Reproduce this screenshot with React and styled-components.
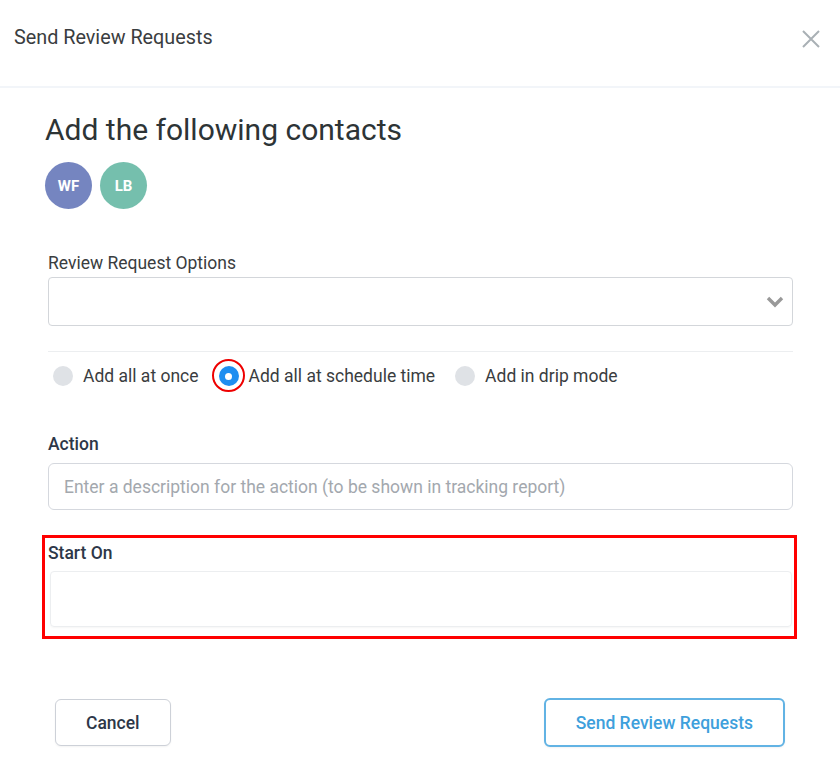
import React from "react";
import styled, { createGlobalStyle } from "styled-components";

const GlobalStyle = createGlobalStyle`
  * { box-sizing: border-box; }
  body {
    margin: 0;
    background: #fff;
    font-family: Roboto, "Liberation Sans", sans-serif;
  }
`;

function App() {
  const contacts = [
    { initials: "WF", color: "#7585c0" },
    { initials: "LB", color: "#75bfad" },
  ];
  const modes = [
    { label: "Add all at once", checked: false },
    { label: "Add all at schedule time", checked: true, marked: true },
    { label: "Add in drip mode", checked: false },
  ];

  return (
    <Modal>
      <GlobalStyle />
      <Header>
        <Title>Send Review Requests</Title>
        <CloseButton aria-label="close">
          <svg width="18" height="18" viewBox="0 0 18 18">
            <path d="M1 1L17 17M17 1L1 17" stroke="#a9b0b5" strokeWidth="2" fill="none" />
          </svg>
        </CloseButton>
      </Header>

      <Body>
        <Heading>Add the following contacts</Heading>
        <Avatars>
          {contacts.map((c) => (
            <Avatar key={c.initials} $color={c.color}>
              {c.initials}
            </Avatar>
          ))}
        </Avatars>

        <Fields>
          <Label>Review Request Options</Label>
          <Select>
            <svg width="18" height="12" viewBox="0 0 18 12">
              <path d="M2 2L9 9L16 2" stroke="#999" strokeWidth="3.4" fill="none" />
            </svg>
          </Select>

          <Divider />

          <RadioRow>
            {modes.map((m) => (
              <RadioItem key={m.label}>
                <Radio $checked={m.checked}>{m.marked && <Marker />}</Radio>
                <RadioText>{m.label}</RadioText>
              </RadioItem>
            ))}
          </RadioRow>

          <Label $strong $top={46}>Action</Label>
          <Input placeholder="Enter a description for the action (to be shown in tracking report)" />

          <Highlight>
            <Label $strong $top={0}>Start On</Label>
            <DateField />
          </Highlight>
        </Fields>
      </Body>

      <Footer>
        <Button>Cancel</Button>
        <Button $primary>Send Review Requests</Button>
      </Footer>
    </Modal>
  );
}

const Modal = styled.div`
  width: 840px;
  min-height: 783px;
  background: #fff;
`;

const Header = styled.div`
  height: 88px;
  padding: 25px 20px 0 14px;
  display: flex;
  justify-content: space-between;
  align-items: flex-start;
  border-bottom: 2px solid #f2f5f9;
`;

const Title = styled.h1`
  margin: 0;
  font-size: 19.8px;
  line-height: 26px;
  font-weight: 400;
  color: #3a3d40;
`;

const CloseButton = styled.button`
  border: 0;
  background: none;
  padding: 0;
  margin-top: 5px;
  cursor: pointer;
  display: flex;
`;

const Body = styled.div`
  padding: 24px 47px 0 45px;
`;

const Heading = styled.h2`
  margin: 0;
  font-size: 30px;
  line-height: 36px;
  font-weight: 400;
  color: #2d3436;
`;

const Avatars = styled.div`
  display: flex;
  gap: 8px;
  margin-top: 14px;
`;

const Avatar = styled.div`
  width: 47px;
  height: 47px;
  border-radius: 50%;
  background: ${(p) => p.$color};
  color: #fff;
  font-size: 15px;
  font-weight: 700;
  display: flex;
  align-items: center;
  justify-content: center;
`;

const Fields = styled.div`
  padding-left: 3px;
  margin-top: 44px;
`;

const Label = styled.div`
  font-size: 17.5px;
  line-height: 20px;
  font-weight: ${(p) => (p.$strong ? 500 : 400)};
  color: ${(p) => (p.$strong ? "#2d3748" : "#3a3d40")};
  margin-top: ${(p) => (p.$top ? `${p.$top}px` : "0")};
`;

const Select = styled.div`
  margin-top: 4px;
  height: 49px;
  border: 1px solid #d3d6da;
  border-radius: 4px;
  display: flex;
  align-items: center;
  justify-content: flex-end;
  padding-right: 8px;
`;

const Divider = styled.div`
  height: 1px;
  background: #eceef0;
  margin-top: 25px;
`;

const RadioRow = styled.div`
  display: flex;
  align-items: center;
  gap: 20px;
  padding-left: 5px;
  margin-top: 12px;
  height: 24px;
`;

const RadioItem = styled.label`
  display: flex;
  align-items: center;
  gap: 10px;
`;

const Radio = styled.span`
  position: relative;
  width: 20px;
  height: 20px;
  border-radius: 50%;
  background: ${(p) => (p.$checked ? "#1e8ef0" : "#dfe2e6")};
  display: flex;
  align-items: center;
  justify-content: center;
  &::after {
    content: "";
    display: ${(p) => (p.$checked ? "block" : "none")};
    width: 7px;
    height: 7px;
    border-radius: 50%;
    background: #fff;
  }
`;

const Marker = styled.span`
  position: absolute;
  left: -7px;
  top: -7px;
  width: 33px;
  height: 33px;
  border: 2px solid #e00;
  border-radius: 50%;
`;

const RadioText = styled.span`
  font-size: 17.5px;
  color: #3a3d40;
`;

const Input = styled.input`
  display: block;
  width: 100%;
  margin-top: 9px;
  height: 47px;
  border: 1px solid #d5d8de;
  border-radius: 6px;
  padding: 0 15px;
  font-family: inherit;
  font-size: 17.5px;
  color: #333;
  outline: none;
  &::placeholder {
    color: #a3a8ae;
  }
`;

const Highlight = styled.div`
  margin: 25px -4px 0 -6px;
  border: 3px solid #f00;
  padding: 5px 2px 9px 3px;
`;

const DateField = styled.div`
  margin-top: 8px;
  margin-left: 2px;
  height: 56px;
  border: 1px solid #eceef0;
  border-radius: 4px;
  box-shadow: 0 1px 2px rgba(0, 0, 0, 0.04);
`;

const Footer = styled.div`
  display: flex;
  justify-content: space-between;
  align-items: center;
  padding: 0 55px;
  margin-top: 59px;
`;

const Button = styled.button`
  height: ${(p) => (p.$primary ? "49px" : "47px")};
  padding: 0 30px;
  background: #fff;
  border: ${(p) => (p.$primary ? "2px solid #62b3e4" : "1px solid #cdd1d8")};
  border-radius: 6px;
  font-family: inherit;
  font-size: 17.5px;
  font-weight: 500;
  color: ${(p) => (p.$primary ? "#3ea0dc" : "#2d3748")};
  box-shadow: 0 1px 2px rgba(0, 0, 0, 0.05);
  cursor: pointer;
`;

export default App;
